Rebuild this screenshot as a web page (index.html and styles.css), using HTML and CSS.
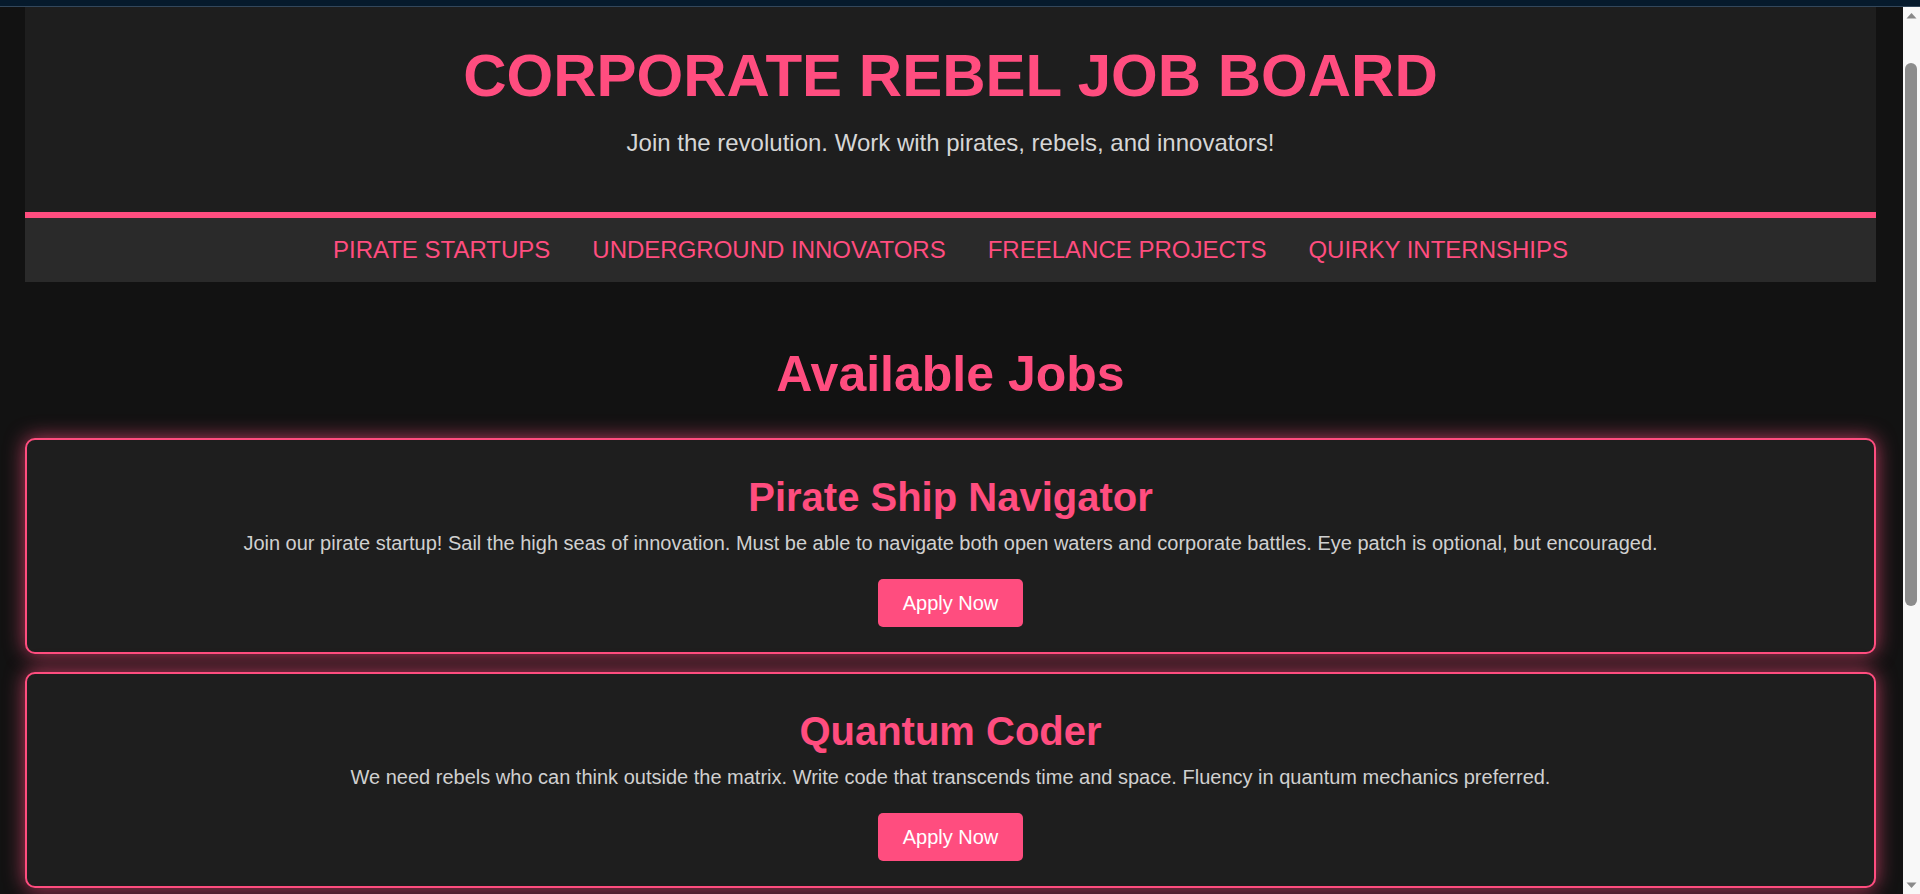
FILE: index.html
```html
<!DOCTYPE html>
<html lang="en">
<head>
<meta charset="utf-8">
<title>Corporate Rebel Job Board</title>
<link rel="stylesheet" href="styles.css">
</head>
<body>
<div class="topbar"></div>
<div class="page">
  <header class="header">
    <h1 class="title">CORPORATE REBEL JOB BOARD</h1>
    <p class="tagline">Join the revolution. Work with pirates, rebels, and innovators!</p>
  </header>
  <nav class="nav">
    <a href="#">PIRATE STARTUPS</a>
    <a href="#">UNDERGROUND INNOVATORS</a>
    <a href="#">FREELANCE PROJECTS</a>
    <a href="#">QUIRKY INTERNSHIPS</a>
  </nav>
  <main class="jobs">
    <h2 class="jobs-title">Available Jobs</h2>
    <div class="job-card">
      <h3 class="job-title">Pirate Ship Navigator</h3>
      <p class="job-desc">Join our pirate startup! Sail the high seas of innovation. Must be able to navigate both open waters and corporate battles. Eye patch is optional, but encouraged.</p>
      <a class="apply-btn" href="#">Apply Now</a>
    </div>
    <div class="job-card">
      <h3 class="job-title">Quantum Coder</h3>
      <p class="job-desc">We need rebels who can think outside the matrix. Write code that transcends time and space. Fluency in quantum mechanics preferred.</p>
      <a class="apply-btn" href="#">Apply Now</a>
    </div>
    <div class="job-card">
      <h3 class="job-title">Underground Inventor</h3>
      <p class="job-desc">Build gadgets in a secret lair beneath the city. Bring your own blueprints, your wildest ideas, and a healthy disregard for the status quo.</p>
      <a class="apply-btn" href="#">Apply Now</a>
    </div>
    <div class="job-card">
      <h3 class="job-title">Chief Chaos Intern</h3>
      <p class="job-desc">A quirky internship for those who thrive in chaos. Learn to break rules creatively and turn mayhem into momentum.</p>
      <a class="apply-btn" href="#">Apply Now</a>
    </div>
  </main>
</div>
<div class="scrollbar" aria-hidden="true">
  <svg class="sb-arrow" width="17" height="17" viewBox="0 0 17 17"><path d="M3.5 11.5 L8.5 6 L13.5 11.5 Z" fill="#8a8a8a"/></svg>
  <div class="sb-track"><div class="sb-thumb"></div></div>
  <svg class="sb-arrow" width="17" height="17" viewBox="0 0 17 17"><path d="M3.5 5.5 L8.5 11 L13.5 5.5 Z" fill="#8a8a8a"/></svg>
</div>
</body>
</html>
```
FILE: styles.css
```css
html, body {
  margin: 0;
  padding: 0;
}

body {
  background: #121212;
  color: #dddddd;
  font-family: "Liberation Sans", Arial, Helvetica, sans-serif;
}

.topbar {
  height: 6px;
  background: #061a2c;
  border-bottom: 1px solid #33475b;
}

.page {
  padding: 0 44px 64px 25px;
}

.header {
  background: #1e1e1e;
  text-align: center;
  padding-top: 34px;
  border-bottom: 6px solid #ff4d7f;
}

.title {
  margin: 0 0 19px;
  font-size: 60px;
  font-weight: bold;
  color: #ff4d7f;
}

.tagline {
  margin: 0;
  padding-bottom: 55px;
  font-size: 24px;
  color: #d6d6d6;
}

.nav {
  background: #2a2a2a;
  display: flex;
  justify-content: center;
  gap: 42px;
  padding: 18px 0;
}

.nav a {
  color: #ff4d7f;
  font-size: 24px;
  text-decoration: none;
}

.jobs {
  padding-top: 63px;
}

.jobs-title {
  margin: 0 0 35px;
  font-size: 50px;
  font-weight: bold;
  text-align: center;
  color: #ff4d7f;
}

.job-card {
  background: #1e1e1e;
  border: 2px solid #ff4d7f;
  border-radius: 10px;
  padding: 25px;
  margin-bottom: 18px;
  display: flex;
  flex-direction: column;
  align-items: center;
  text-align: center;
  box-shadow: 0 0 20px rgba(255, 77, 127, 0.7);
}

.job-title {
  margin: 10px 0 12px;
  font-size: 40px;
  font-weight: bold;
  color: #ff4d7f;
}

.job-desc {
  margin: 0 0 24px;
  font-size: 20px;
  color: #d0d0d0;
}

.apply-btn {
  background: #ff4d7f;
  color: #ffffff;
  font-size: 20px;
  padding: 12.5px 25px;
  border-radius: 5px;
  text-decoration: none;
}

/* window scrollbar overlay */
.scrollbar {
  position: fixed;
  top: 7px;
  right: 0;
  bottom: 0;
  width: 17px;
  background: #f8f8f8;
  display: flex;
  flex-direction: column;
}

.sb-arrow {
  display: block;
  flex: none;
}

.sb-track {
  flex: 1;
  padding: 39px 3px 0 2px;
}

.sb-thumb {
  height: 543px;
  background: #8c8c8c;
  border-radius: 6px;
}
```
